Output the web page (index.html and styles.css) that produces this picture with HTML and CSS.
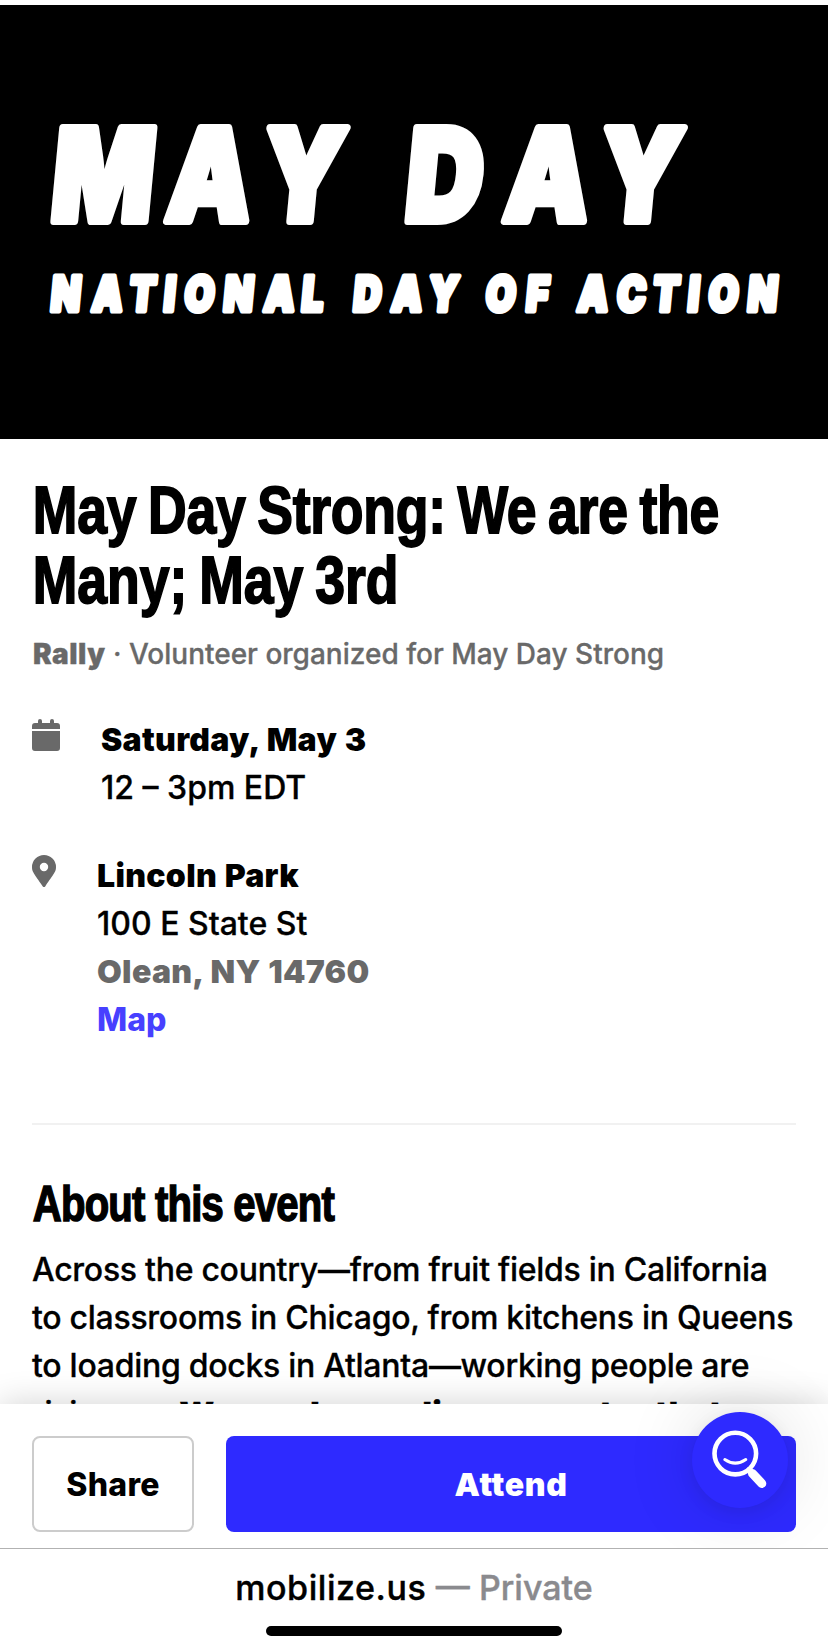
FILE: index.html
```
<!DOCTYPE html>
<html lang="en">
<head>
<meta charset="utf-8">
<title>May Day Strong: We are the Many; May 3rd</title>
<link rel="stylesheet" href="styles.css">
</head>
<body>
<div class="screen">
  <main class="content">
    <svg class="banner" viewBox="0 0 828 434" role="img">
      <g class="banner-text">
        <g transform="translate(0 219.500) skewX(-5.400) scale(.83 1)" stroke-width="8">
          <text class="banner-big" y="-4" x="119.500 248 360.500">MAY</text>
          <text class="banner-big" y="-4" x="531 655 767">DAY</text>
        </g>
        <g transform="translate(0 308.500) skewX(-5.400) scale(.8 1)" stroke-width="5">
          <text class="banner-small" y="-2.500" x="80.500 132.500 176.300 210 247.500 296.300 347.500 389">NATIONAL</text>
          <text class="banner-small" y="-2.500" x="457.500 507 552.500">DAY</text>
          <text class="banner-small" y="-2.500" x="623.800 670">OF</text>
          <text class="banner-small" y="-2.500" x="739.500 787.500 830.600 865 902.500 951.300">ACTION</text>
        </g>
      </g>
    </svg>

    <section class="summary">
      <h1 class="title">May Day Strong: We are the<br><span>Many; May 3rd</span></h1>
      <p class="meta"><strong>Rally</strong> · Volunteer organized for May Day Strong</p>

      <div class="row row-date">
        <svg class="icon-cal" viewBox="0 0 28 32"><path d="M0 10V7a3 3 0 0 1 3-3h3V2a2 2 0 0 1 4 0v2h8V2a2 2 0 0 1 4 0v2h3a3 3 0 0 1 3 3v3zM0 12h28v17a3 3 0 0 1-3 3H3a3 3 0 0 1-3-3z"/></svg>
        <div class="lines">
          <strong class="l-date">Saturday, May 3</strong>
          <span class="l-time">12 – 3pm EDT</span>
        </div>
      </div>

      <div class="row row-place">
        <svg class="icon-pin" viewBox="0 0 24 32"><path fill-rule="evenodd" d="M10.800 31.400C1.700 18.200 0 16.800 0 12a12 12 0 0 1 24 0c0 4.800-1.700 6.200-10.800 19.400a1.450 1.450 0 0 1-2.400 0zM12 16.200a4.200 4.200 0 1 0 0-8.400 4.200 4.200 0 0 0 0 8.400z"/></svg>
        <div class="lines">
          <strong class="l-park">Lincoln Park</strong>
          <span class="l-street">100 E State St</span>
          <strong class="l-city">Olean, NY 14760</strong>
          <a class="l-map">Map</a>
        </div>
      </div>
    </section>

    <hr class="divider">

    <section class="about">
      <h2 class="subtitle">About this event</h2>
      <p class="body-text">
        <span>Across the country—from fruit fields in California</span>
        <span>to classrooms in Chicago, from kitchens in Queens</span>
        <span>to loading docks in Atlanta—working people are</span>
        <span>rising up. <strong>We are demanding a country that</strong></span>
      </p>
    </section>
  </main>

  <div class="actions">
    <button class="btn share">Share</button>
    <button class="btn attend">Attend</button>
    <div class="fab">
      <svg viewBox="0 0 96 96" fill="none" stroke="#fff" stroke-linecap="round">
        <circle cx="43.300" cy="41.600" r="20.800" stroke-width="4.600"/>
        <path d="M32.800 47.500Q43.300 54.800 53.800 47.500" stroke-width="3"/>
        <path d="M57 57.500L59 60" stroke-width="5"/>
        <path d="M60.500 61.500L69.800 71.500" stroke-width="9"/>
      </svg>
    </div>
  </div>

  <footer class="browser-bar">
    <p class="address">mobilize.us <span>— Private</span></p>
    <div class="home-indicator"></div>
  </footer>
</div>
</body>
</html>
```

FILE: styles.css
```
* { box-sizing: border-box; }
body { margin: 0; background: #fff; color: #000; font-family: Inter, sans-serif; }
h1, h2, p { margin: 0; }

.screen { display: flex; flex-direction: column; width: 828px; height: 1652px; overflow: hidden; }
.content { height: 1404px; padding-top: 5px; overflow: hidden; }

.banner { display: block; width: 828px; height: 434px; background: #000; }
.banner-text { fill: #fff; stroke: #fff; stroke-linejoin: round; text-anchor: middle; font-family: Inter, sans-serif; font-weight: 900; }
.banner-big { font-size: 128px; }
.banner-small { font-size: 48px; }

.summary { padding: 36px 32px 0; }
.title { width: 860px; padding-left: 1px; font: bold 66px/70px "Liberation Sans", sans-serif; letter-spacing: -.35px; word-spacing: -3.5px; white-space: nowrap; transform: scaleX(.812); transform-origin: 0 0; -webkit-text-stroke: 1.8px #000; }
.title span { letter-spacing: -.1px; }
.meta { margin-top: 19px; padding-left: 1px; color: #696969; font-size: 28px; font-weight: 500; line-height: 40px; white-space: nowrap; -webkit-text-stroke: .3px; }
.meta strong { font-weight: 900; letter-spacing: .5px; }

.row { display: flex; align-items: flex-start; fill: #696969; }
.row-date { margin-top: 42px; gap: 41px; }
.row-place { margin-top: 40px; gap: 41px; }
.icon-cal { width: 28px; height: 32px; margin-top: 3px; }
.icon-pin { width: 24px; height: 32px; margin-top: 3px; }
.lines { display: flex; flex-direction: column; align-items: flex-start; font-size: 32px; font-weight: 500; line-height: 48px; white-space: nowrap; }
.lines span { -webkit-text-stroke: .3px; }
.lines strong { font-weight: 900; letter-spacing: .3px; word-spacing: 1px; }
.lines .l-city { color: #696969; }
.l-map { color: #4740ff; font-weight: 800; }

.divider { height: 2px; margin: 79px 32px 0; border: 0; background: #f1f1f1; }

.about { padding: 52px 32px 0; }
.subtitle { padding-left: 1px; font: bold 50px/54px "Liberation Sans", sans-serif; letter-spacing: -1px; white-space: nowrap; transform: scaleX(.802); transform-origin: 0 0; -webkit-text-stroke: 1.5px #000; }
.body-text { margin-top: 15px; font-size: 32px; font-weight: 550; letter-spacing: -.28px; line-height: 48px; white-space: nowrap; -webkit-text-stroke: .3px; }
.body-text span { display: block; }
.body-text strong { font-weight: 900; letter-spacing: .4px; }

.actions { position: relative; display: flex; gap: 32px; height: 144px; padding: 32px 32px 16px; background: #fff; box-shadow: 0 0 32px rgba(0, 0, 0, .18); }
.btn { height: 96px; padding: 0; border-radius: 8px; font: 800 32px/94px Inter, sans-serif; letter-spacing: .3px; }
.share { width: 162px; border: 2px solid #ccc; background: #fff; color: #000; }
.attend { flex: 1; padding-top: 1px; border: 0; background: #2e2aff; color: #fff; font-weight: 900; letter-spacing: .7px; }
.fab { position: absolute; left: 692px; top: 8px; width: 96px; height: 96px; border-radius: 50%; background: #2e2aff; box-shadow: 0 4px 16px rgba(0, 0, 0, .08), 0 0 72px rgba(0, 0, 0, .13); }
.fab svg { display: block; width: 96px; height: 96px; }

.browser-bar { position: relative; display: flex; flex-direction: column; align-items: center; height: 104px; border-top: 1px solid #b2b2b2; background: #fff; }
.address { margin-top: 18px; font-size: 34px; font-weight: 500; letter-spacing: .55px; line-height: 42px; white-space: nowrap; -webkit-text-stroke: .4px; }
.address span { color: #8a8a8e; letter-spacing: 0; }
.home-indicator { width: 296px; height: 10px; margin-top: 17px; border-radius: 5px; background: #000; }
```
